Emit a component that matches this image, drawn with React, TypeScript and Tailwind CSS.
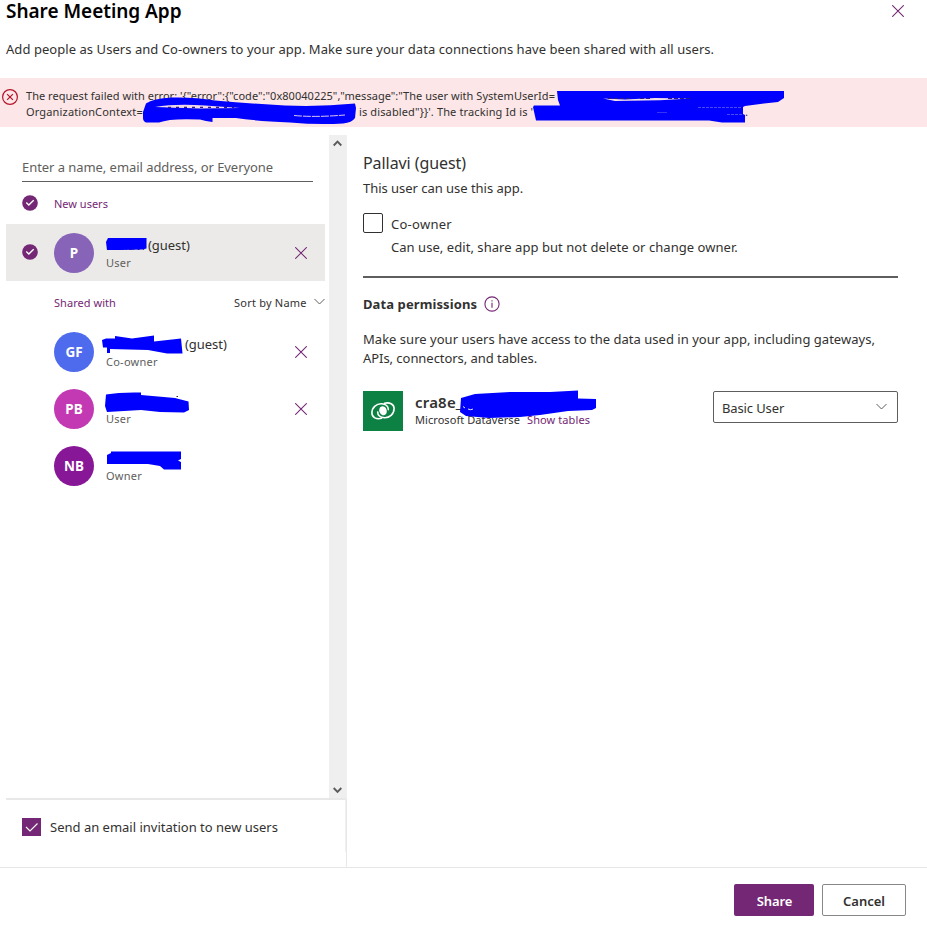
type IconProps = { className?: string };

const CloseIcon = ({ className = '' }: IconProps) => (
  <svg className={className} width="12" height="12" viewBox="0 0 12 12" fill="none" stroke="#742774" strokeWidth="1.05">
    <path d="M.2.2l11.600 11.600M11.800.2L.2 11.800" />
  </svg>
);

const CheckCircle = ({ className = '' }: IconProps) => (
  <svg className={className} width="16" height="16" viewBox="0 0 16 16">
    <circle cx="8" cy="8" r="7.800" fill="#742774" />
    <path d="M4.300 7.600l2.500 2.400 4.900-4.700" fill="none" stroke="#fff" strokeWidth="1.400" />
  </svg>
);

const ErrorIcon = ({ className = '' }: IconProps) => (
  <svg className={className} width="16" height="16" viewBox="0 0 16 16" fill="none" stroke="#b3142a">
    <circle cx="8" cy="8" r="7.400" strokeWidth="1.200" />
    <path d="M5.100 5.100l5.800 5.800M10.900 5.100l-5.800 5.800" strokeWidth="1.200" />
  </svg>
);

const ChevronDown = ({ className = '' }: IconProps) => (
  <svg className={className} width="11" height="8" viewBox="0 0 11 8" fill="none" stroke="#605e5c" strokeWidth="1">
    <path d="M.5 1l5 5 5-5" />
  </svg>
);

const InfoIcon = ({ className = '' }: IconProps) => (
  <svg className={className} width="16" height="16" viewBox="0 0 16 16" fill="none" stroke="#742774">
    <circle cx="8" cy="8" r="7.100" strokeWidth="1.100" />
    <path d="M8 6.700v5M8 4.200v1.300" strokeWidth="1.100" />
  </svg>
);

const SWIRL = 'M18.500 27.300C13.500 28.600 8.900 26.600 8.900 22C8.900 16.200 13.800 12.600 18.400 12.800C22.800 13 25.400 15.500 25.300 18.600';

const DataverseLogo = () => (
  <svg className="h-10 w-10 shrink-0 bg-[#0d8043]" viewBox="0 0 40 40" fill="none" stroke="#fff" strokeLinecap="round">
    <path d={SWIRL} strokeWidth="1.600" />
    <path d={SWIRL} strokeWidth="1.600" transform="rotate(180 20 19.800)" />
    <ellipse cx="20" cy="19.800" rx="3.700" ry="4.600" transform="rotate(-20 20 19.800)" fill="#fff" stroke="none" />
  </svg>
);

type PersonProps = {
  initials: string;
  color: string;
  name: string;
  suffix?: string;
  role: string;
  selected?: boolean;
  removable?: boolean;
};

const Person = ({ initials, color, name, suffix, role, selected, removable }: PersonProps) => (
  <div className={`ml-[6px] flex h-[57px] w-[319px] items-start ${selected ? 'bg-[#ebeae9]' : ''}`}>
    <div className="ml-4 mt-5 w-8 shrink-0">{selected && <CheckCircle />}</div>
    <div className={`mt-[9px] flex h-10 w-10 shrink-0 items-center justify-center rounded-full pt-px text-[13.500px] font-bold text-white ${color}`}>
      {initials}
    </div>
    <div className="ml-3 flex-1 pt-3">
      <div className="flex h-[18px] text-[13px] leading-[18px] text-[#323130]">
        <span className={suffix === undefined ? '' : name === 'Pallavi' ? 'w-[42px]' : 'w-[79px]'}>{name}</span>
        <span className="tracking-[-.05px]">{suffix}</span>
      </div>
      <div className="mt-px text-[11px] leading-[15px] tracking-[.25px] text-[#605e5c]">{role}</div>
    </div>
    {removable && <CloseIcon className="mr-[18px] mt-[23px]" />}
  </div>
);

const Scribbles = () => (
  <svg className="pointer-events-none absolute left-0 top-0" width="927" height="500" viewBox="0 0 927 500" fill="#0000fe">
    <path d="M557 91H784V98L778 102L764 103.500L745 106L743 107V114L745 115V122.500H722L709 120.500H536L533 107L534 105.500H560L558 100Z" />
    <path d="M603 98.600L625 99.500L655 98L690 98.600L660 100.300L615 101Z" fill="#f3dfe8" />
    <path d="M608 98.500h22M640 98.500h12M668 98.500h22" stroke="#2a1a8a" strokeWidth="1" strokeDasharray="4 2" />
    <path d="M698 107.500h44M727 114.500h15" stroke="#6a68ea" strokeWidth=".7" strokeDasharray="3 1" />
    <path d="M657 112.500h10" stroke="#6a68ea" strokeWidth=".5" />
    <path d="M143 112L146 103.500Q153 98.500 172 97.500Q195 97 215 100.500Q250 103.500 285 105.500Q320 107 355 103.500L356 108L355 118Q352 122.500 343 123.500Q318 125 290 122.500Q255 121 236 118H212.500V122L206 121L200 119.500Q170 118 159 122.500H146Q143 121 143 118Z" />
    <path d="M155 107Q175 103.500 205 105.500L240 108L200 108.500Q170 107.500 155 107Z" fill="#f3d9e6" />
    <path d="M168 107.300h66" stroke="#2a1a8a" strokeWidth="1.200" strokeDasharray="3 5" />
    <path d="M294 115.500Q315 117.500 345 115" fill="none" stroke="#dcc8f0" strokeWidth="1" strokeDasharray="8 1" />
    <path d="M108 238H146.500V248.500L142 249.500L120 250L107 250L106 242Z" />
    <path d="M102 340L106 338.500H115V336L132 338.500L154 335.500V341.500L181 338.500L182.500 353.500H167L148 350L110 349V353H107V347.500H103Z" />
    <path d="M106 394.500Q120 392 141 392.500V395L175 398L188.500 401.500L189 410L184 412.500L160 412L141 410L107 412L105 406Z" />
    <path d="M176.500 396.500h1.500" stroke="#323130" />
    <path d="M111 451.500H181V459L178 460.500L181 462V469.500H164L160 466L148 464H107V455L111 453Z" />
    <path d="M461 398L475 394L510 392L550 392L578 390.500V398.500L596 399V408L592 410L568 411L540 415L520 417L489 418L466 416L460 412Z" />
    <path d="M463 406.500l2 1.500M468 409q3 1.500 5 0" fill="none" stroke="#e4e2fc" strokeWidth="1" />
  </svg>
);

export default function App() {
  return (
    <div className="relative flex h-[930px] w-[927px] flex-col bg-white font-['Noto_Sans','Liberation_Sans',sans-serif] text-[13px] text-[#323130]">
      <header className="flex h-[78px] shrink-0 justify-between pl-[6px]">
        <div className="whitespace-nowrap">
          <h1 className="text-[19px] font-semibold leading-[22px] tracking-[-.03px] text-black">Share Meeting App</h1>
          <p className="mt-[18px] leading-[18px] tracking-[.053px]">
            Add people as Users and Co-owners to your app. Make sure your data connections have been shared with all users.
          </p>
        </div>
        <CloseIcon className="mr-[23px] mt-[5px]" />
      </header>

      <div className="flex h-[49px] shrink-0 items-start whitespace-nowrap bg-[#fce6e7] text-[11px] leading-[15px]">
        <ErrorIcon className="ml-[2px] mt-[11px] shrink-0" />
        <div className="ml-2 pt-[10px]">
          <div className="tracking-[.034px]">
            {'The request failed with error: \'{"error":{"code":"0x80040225","message":"The user with SystemUserId='}
          </div>
          <div className="mt-px flex">
            <span className="w-[333px] tracking-[.16px]">OrganizationContext=</span>
            <span className="w-[386px] tracking-[.13px]">{'is disabled"}}\'. The tracking Id is \''}</span>
            <span>.</span>
          </div>
        </div>
      </div>

      <main className="flex h-[740px] shrink-0">
        <aside className="flex w-[347px] shrink-0 flex-col">
          <div className="flex h-[671px]">
            <div className="w-[329px] pt-[31px]">
              <div className="ml-[22px] h-6 w-[291px] border-b border-[#605e5c] leading-[18px] tracking-[-.055px] text-[#605e5c]">
                Enter a name, email address, or Everyone
              </div>
              <div className="ml-[22px] mt-[13px] flex h-4">
                <CheckCircle />
                <span className="ml-4 mt-px text-[11px] leading-[15px] text-[#742774]">New users</span>
              </div>
              <div className="mt-[13px]">
                <Person initials="P" color="bg-[#8764b8]" name="Pallavi" suffix="(guest)" role="User" selected removable />
              </div>
              <div className="ml-[54px] mt-[14px] flex h-[15px] text-[11px] leading-[15px]">
                <span className="w-[180px] tracking-[.05px] text-[#742774]">Shared with</span>
                <span className="w-[73px] tracking-[.22px]">Sort by Name</span>
                <ChevronDown className="ml-[7px] mt-[3px]" />
              </div>
              <div className="mt-[13px]">
                <Person initials="GF" color="bg-[#4f6bed]" name="" suffix="(guest)" role="Co-owner" removable />
                <Person initials="PB" color="bg-[#c239b3]" name="" role="User" removable />
                <Person initials="NB" color="bg-[#881798]" name="" role="Owner" />
              </div>
            </div>
            <div className="mt-2 flex w-[18px] flex-col items-center justify-between border-r border-[#f0f0f0] bg-[#efefef] pb-1 pt-[5px]">
              <svg width="9" height="7" viewBox="0 0 9 7" fill="none" stroke="#5a5a5a" strokeWidth="1.900">
                <path d="M.7 5.500l3.800-3.800 3.800 3.800" />
              </svg>
              <svg width="9" height="7" viewBox="0 0 9 7" fill="none" stroke="#5a5a5a" strokeWidth="1.900">
                <path d="M.7 1l3.800 3.800 3.800-3.800" />
              </svg>
            </div>
          </div>
          <div className="flex h-[69px] border-r border-[#e8e8e8]">
            <div className="ml-[6px] flex h-[54px] w-[340px] items-start border-r border-t-2 border-r-[#f0f0f0] border-t-[#e8e8e8] pl-4 pt-[18px]">
              <svg className="bg-[#742774]" width="19" height="18" viewBox="0 0 19 18" fill="none" stroke="#fff">
                <path d="M4 9l4 4 7.500-7.500" strokeWidth="1.100" />
              </svg>
              <span className="ml-[9px] leading-[18px]">Send an email invitation to new users</span>
            </div>
          </div>
        </aside>

        <section className="ml-4 w-[535px] whitespace-nowrap pt-[25px]">
          <h2 className="text-[16px] leading-[22px] tracking-[-.07px]">Pallavi (guest)</h2>
          <p className="mt-[5px] leading-[18px] tracking-[-.03px]">This user can use this app.</p>
          <div className="mt-4 flex border-b-2 border-[#605e5c] pb-[20px]">
            <span className="h-5 w-5 rounded-[2px] border border-[#323130]" />
            <div className="ml-2 pt-[2px] leading-[18px]">
              <div className="tracking-[.27px]">Co-owner</div>
              <div className="mt-[5px] tracking-[.05px]">Can use, edit, share app but not delete or change owner.</div>
            </div>
          </div>
          <div className="mt-[17px] flex h-[18px] items-center">
            <h3 className="font-bold leading-[18px] tracking-[.1px]">Data permissions</h3>
            <InfoIcon className="ml-[7px]" />
          </div>
          <div className="mt-[17px] leading-[18px]">
            <div className="tracking-[.022px]">
              Make sure your users have access to the data used in your app, including gateways,
            </div>
            <div className="mt-px tracking-[-.05px]">APIs, connectors, and tables.</div>
          </div>
          <div className="mt-6 flex">
            <DataverseLogo />
            <div className="ml-3 flex-1 pt-px">
              <div className="text-[15px] font-semibold leading-5 tracking-[.2px]">cra8e_</div>
              <div className="flex text-[11px] leading-[15px]">
                <span className="w-[112px] tracking-[.06px]">Microsoft Dataverse</span>
                <span className="tracking-[.1px] text-[#742774]">Show tables</span>
              </div>
            </div>
            <div className="flex h-8 w-[185px] justify-between rounded-[2px] border border-[#605e5c] pl-2 pr-[10px] pt-[7px]">
              <span className="leading-[18px] tracking-[-.12px]">Basic User</span>
              <ChevronDown className="mt-[4px]" />
            </div>
          </div>
        </section>
      </main>

      <footer className="flex flex-1 justify-end gap-2 border-t border-[#e6e6e6] pr-[21px] pt-4 font-semibold">
        <button className="flex h-8 w-20 justify-center rounded-[2px] bg-[#742774] pl-px pt-2 leading-[18px] tracking-[-.15px] text-white">Share</button>
        <button className="flex h-8 w-[84px] justify-center rounded-[2px] border border-[#8a8886] pt-[7px] leading-[18px]">Cancel</button>
      </footer>

      <Scribbles />
    </div>
  );
}
